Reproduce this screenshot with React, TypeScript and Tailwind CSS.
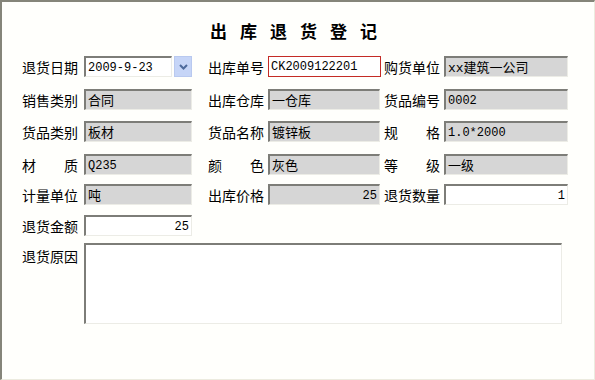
import type { ReactNode } from 'react'

const cjk = '"Noto Sans CJK SC", "Noto Sans", sans-serif'
const mono = '"Liberation Mono", "Noto Sans CJK SC", monospace'

type FieldProps = {
  value?: string
  width: string
  kind?: 'gray' | 'white' | 'red'
  right?: boolean
}

function Field({ value = '', width, kind = 'gray', right }: FieldProps) {
  const base =
    kind === 'red'
      ? 'border border-[#c42b26] bg-white'
      : kind === 'white'
        ? 'border-t-2 border-l-2 border-b border-r border-t-[#7d7d78] border-l-[#7d7d78] border-b-[#ecece6] border-r-[#ecece6] bg-white'
        : 'border-t-2 border-l-2 border-b border-r border-t-[#7d7d78] border-l-[#7d7d78] border-b-[#ecece6] border-r-[#ecece6] bg-[#d6d6d6]'
  const isCjk = /[\u4e00-\u9fff]/.test(value)
  return (
    <div
      className={`${width} h-[21px] flex items-center px-[2px] text-black ${base} ${right ? 'justify-end' : ''}`}
      style={{ fontFamily: mono }}
    >
      <span className={`whitespace-nowrap leading-[17px] translate-y-[1px] ${isCjk ? 'text-[13px]' : 'text-[12px]'}`}>{value}</span>
    </div>
  )
}

function Label({ children, spread }: { children: ReactNode; spread?: boolean }) {
  if (spread && typeof children === 'string') {
    return (
      <div className="w-[56px] flex justify-between text-[14px] text-black leading-none">
        {children.split('').map((c, i) => (
          <span key={i}>{c}</span>
        ))}
      </div>
    )
  }
  return <div className="w-[56px] text-[14px] text-black leading-none whitespace-nowrap">{children}</div>
}

function DateBox() {
  return (
    <div className="flex items-center gap-[2px]">
      <Field value="2009-9-23" width="w-[88px]" kind="white" />
      <div className="w-[18px] h-[21px] border border-[#b9c9ef] bg-[#c6d5f7] flex items-center justify-center">
        <svg width="9" height="6" viewBox="0 0 9 6">
          <path d="M1 1 L4.5 4.5 L8 1" fill="none" stroke="#4d6a9c" strokeWidth="2" />
        </svg>
      </div>
    </div>
  )
}

export default function App() {
  return (
    <div
      className="w-[595px] h-[380px] bg-[#fffffc] border-t-2 border-l-2 border-t-[#85857a] border-l-[#85857a] border-r border-b border-r-[#ecebdf] border-b-[#ecebdf] box-border"
      style={{ fontFamily: cjk }}
    >
      <div className="pt-[20px] h-[23px] box-content flex justify-center">
        <h1 className="text-[17px] font-bold tracking-[13px] leading-none text-black pl-[4px]">
          出库退货登记
        </h1>
      </div>

      <div className="pl-[20px] flex flex-col">
        <div className="mt-[11px] flex items-center">
          <Label>退货日期</Label>
          <div className="ml-[6px]">
            <DateBox />
          </div>
          <div className="ml-[16px]"><Label>出库单号</Label></div>
          <div className="ml-[4px]"><Field value="CK2009122201" width="w-[113px]" kind="red" /></div>
          <div className="ml-[3px]"><Label>购货单位</Label></div>
          <div className="ml-[4px]"><Field value="xx建筑一公司" width="w-[124px]" /></div>
        </div>

        <div className="mt-[12px] flex items-center">
          <Label>销售类别</Label>
          <div className="ml-[6px]"><Field value="合同" width="w-[108px]" /></div>
          <div className="ml-[16px]"><Label>出库仓库</Label></div>
          <div className="ml-[4px]"><Field value="一仓库" width="w-[112px]" /></div>
          <div className="ml-[4px]"><Label>货品编号</Label></div>
          <div className="ml-[4px]"><Field value="0002" width="w-[124px]" /></div>
        </div>

        <div className="mt-[11px] flex items-center">
          <Label>货品类别</Label>
          <div className="ml-[6px]"><Field value="板材" width="w-[108px]" /></div>
          <div className="ml-[16px]"><Label>货品名称</Label></div>
          <div className="ml-[4px]"><Field value="镀锌板" width="w-[112px]" /></div>
          <div className="ml-[4px]"><Label spread>规格</Label></div>
          <div className="ml-[4px]"><Field value="1.0*2000" width="w-[124px]" /></div>
        </div>

        <div className="mt-[12px] flex items-center">
          <Label spread>材质</Label>
          <div className="ml-[6px]"><Field value="Q235" width="w-[108px]" /></div>
          <div className="ml-[16px]"><Label spread>颜色</Label></div>
          <div className="ml-[4px]"><Field value="灰色" width="w-[112px]" /></div>
          <div className="ml-[4px]"><Label spread>等级</Label></div>
          <div className="ml-[4px]"><Field value="一级" width="w-[124px]" /></div>
        </div>

        <div className="mt-[9px] flex items-center">
          <Label>计量单位</Label>
          <div className="ml-[6px]"><Field value="吨" width="w-[108px]" /></div>
          <div className="ml-[16px]"><Label>出库价格</Label></div>
          <div className="ml-[4px]"><Field value="25" width="w-[112px]" right /></div>
          <div className="ml-[4px]"><Label>退货数量</Label></div>
          <div className="ml-[4px]"><Field value="1" width="w-[124px]" kind="white" right /></div>
        </div>

        <div className="mt-[10px] flex items-center">
          <Label>退货金额</Label>
          <div className="ml-[6px]"><Field value="25" width="w-[108px]" kind="white" right /></div>
        </div>

        <div className="mt-[7px] flex items-start">
          <div className="pt-[6px]"><Label>退货原因</Label></div>
          <div className="ml-[6px] w-[478px] h-[81px] bg-white border-t-2 border-l-2 border-b border-r border-t-[#7d7d78] border-l-[#7d7d78] border-b-[#ecece6] border-r-[#ecece6]" />
        </div>
      </div>
    </div>
  )
}
